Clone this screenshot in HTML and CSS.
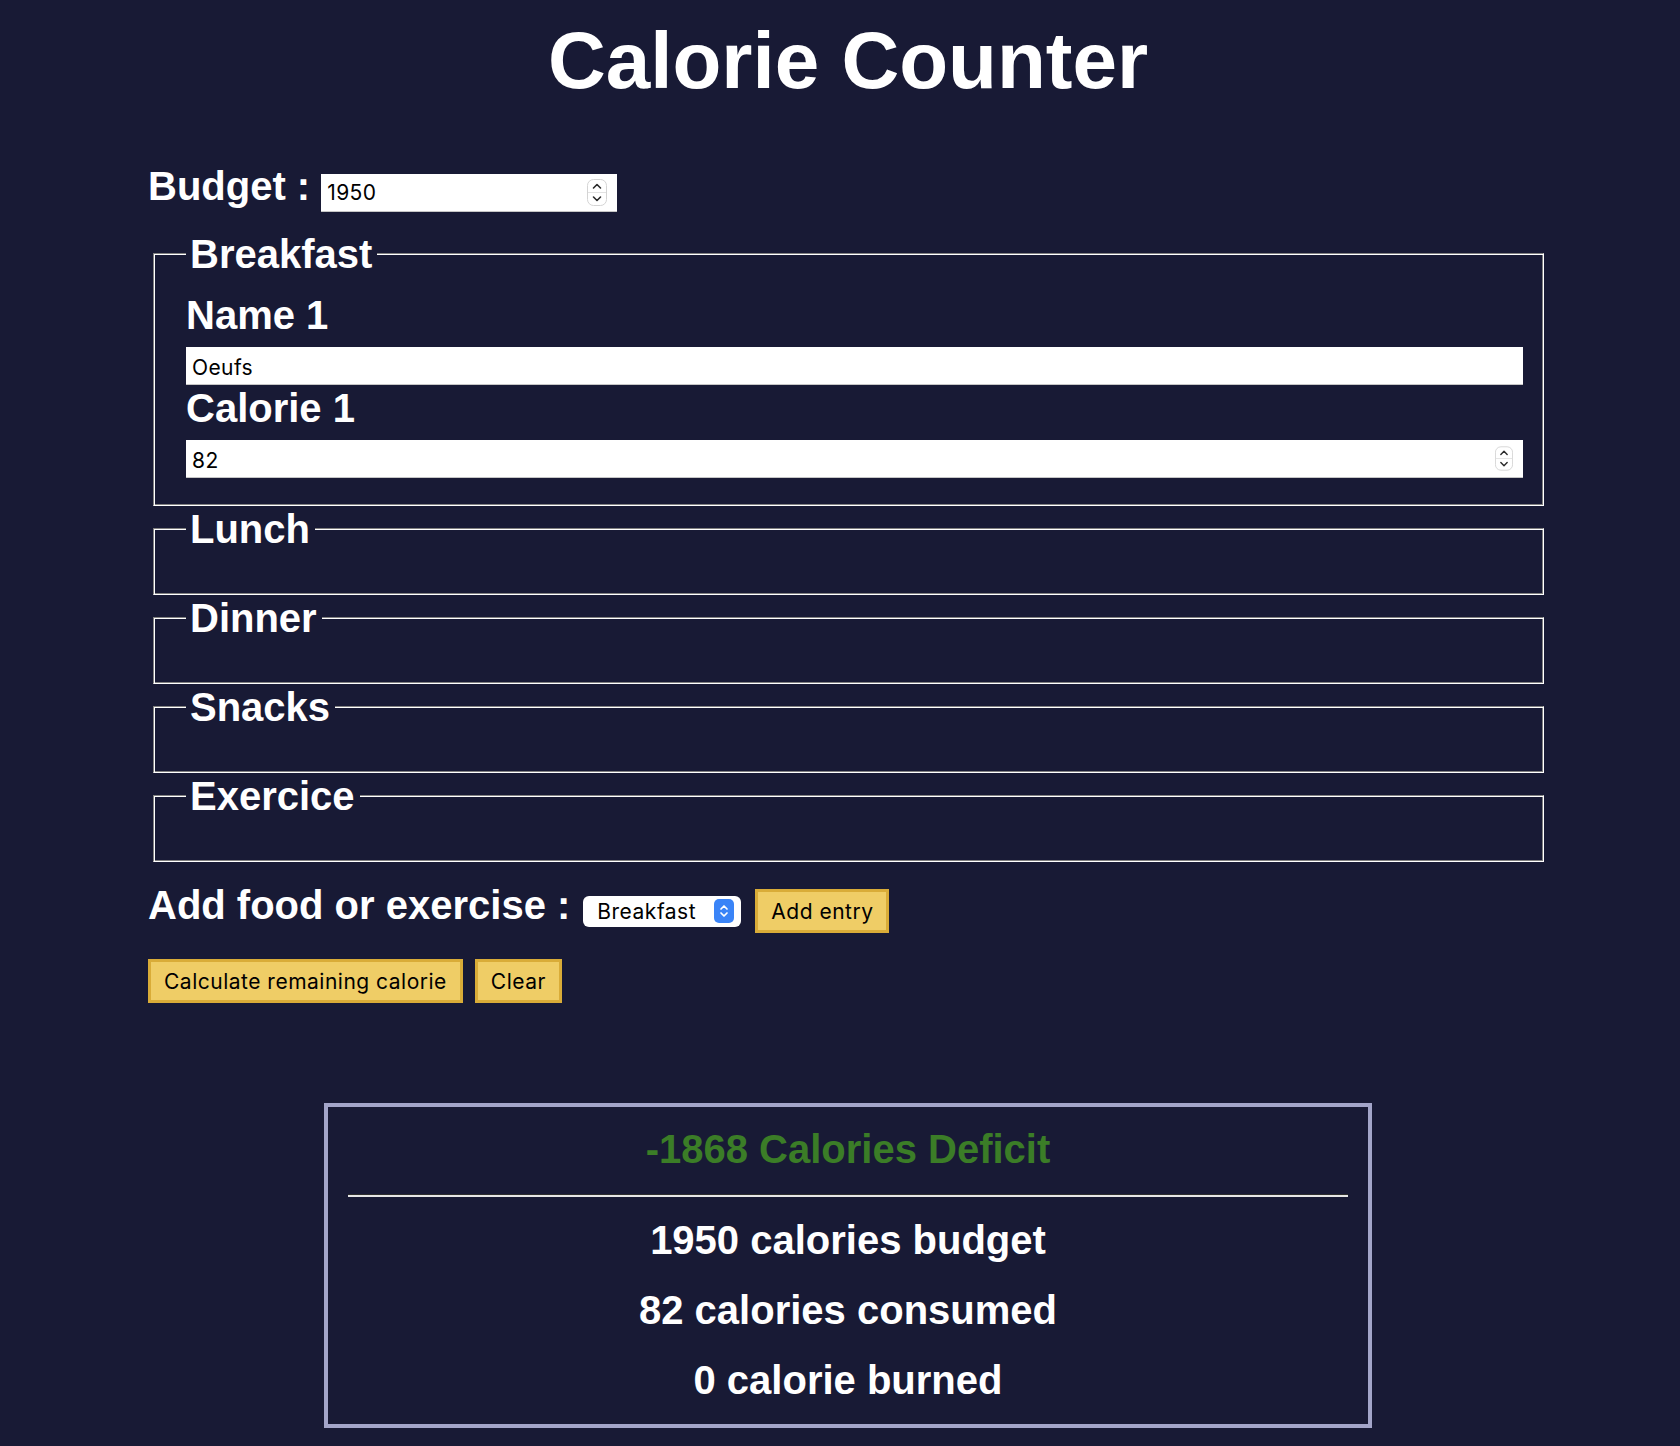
FILE: index.html
```html
<!DOCTYPE html>
<html lang="en">
<head>
<meta charset="utf-8">
<title>Calorie Counter</title>
<link rel="stylesheet" href="styles.css">
</head>
<body>
<main class="page">
  <h1 class="title">Calorie Counter</h1>
  <div class="container">
    <form class="form">
      <div class="budget-row">
        <label class="big-label" for="budget">Budget :</label>
        <span class="num-wrap budget-wrap">
          <input id="budget" class="field num-field" type="number" value="1950">
          <svg class="spinner" viewBox="0 0 20 27" width="20" height="27" aria-hidden="true">
            <rect x="0.5" y="0.5" width="19" height="26" rx="6" fill="#fff" stroke="#d4d4d4"/>
            <line x1="1" y1="13.5" x2="19" y2="13.5" stroke="#e2e2e2"/>
            <path d="M6.5 9 L10 5.5 L13.5 9" fill="none" stroke="#2b2b2b" stroke-width="1.6" stroke-linecap="round" stroke-linejoin="round"/>
            <path d="M6.5 18 L10 21.5 L13.5 18" fill="none" stroke="#2b2b2b" stroke-width="1.6" stroke-linecap="round" stroke-linejoin="round"/>
          </svg>
        </span>
      </div>

      <fieldset class="meal">
        <legend>Breakfast</legend>
        <div class="entries">
          <label class="entry-label" for="name-1">Name 1</label>
          <input id="name-1" class="field wide-field" type="text" value="Oeufs">
          <label class="entry-label" for="cal-1">Calorie 1</label>
          <span class="num-wrap wide-wrap">
            <input id="cal-1" class="field wide-field num-field" type="number" value="82">
            <svg class="spinner spinner-sm" viewBox="0 0 20 27" width="18" height="25" aria-hidden="true">
              <rect x="0.5" y="0.5" width="19" height="26" rx="6" fill="#fff" stroke="#d4d4d4"/>
              <line x1="1" y1="13.5" x2="19" y2="13.5" stroke="#e2e2e2"/>
              <path d="M6.5 9 L10 5.5 L13.5 9" fill="none" stroke="#2b2b2b" stroke-width="1.6" stroke-linecap="round" stroke-linejoin="round"/>
              <path d="M6.5 18 L10 21.5 L13.5 18" fill="none" stroke="#2b2b2b" stroke-width="1.6" stroke-linecap="round" stroke-linejoin="round"/>
            </svg>
          </span>
        </div>
      </fieldset>

      <fieldset class="meal"><legend>Lunch</legend><div class="entries"></div></fieldset>
      <fieldset class="meal"><legend>Dinner</legend><div class="entries"></div></fieldset>
      <fieldset class="meal"><legend>Snacks</legend><div class="entries"></div></fieldset>
      <fieldset class="meal"><legend>Exercice</legend><div class="entries"></div></fieldset>

      <div class="controls">
        <label class="big-label" for="entry-type">Add food or exercise :</label>
        <span class="select-wrap">
          <select id="entry-type" class="select">
            <option>Breakfast</option>
            <option>Lunch</option>
            <option>Dinner</option>
            <option>Snacks</option>
            <option>Exercise</option>
          </select>
          <svg class="select-icon" viewBox="0 0 20 24" width="20" height="24" aria-hidden="true">
            <rect x="0" y="0" width="20" height="24" rx="5" fill="#3a84f7"/>
            <path d="M7 10 L10 7 L13 10" fill="none" stroke="#fff" stroke-width="1.7" stroke-linecap="round" stroke-linejoin="round"/>
            <path d="M7 14 L10 17 L13 14" fill="none" stroke="#fff" stroke-width="1.7" stroke-linecap="round" stroke-linejoin="round"/>
          </svg>
        </span>
        <button type="button" class="btn">Add entry</button>
      </div>

      <div class="actions">
        <button type="button" class="btn">Calculate remaining calorie</button>
        <button type="button" class="btn">Clear</button>
      </div>
    </form>
  </div>

  <div class="output">
    <span class="deficit">-1868 Calories Deficit</span>
    <hr class="rule">
    <p class="stat">1950 calories budget</p>
    <p class="stat">82 calories consumed</p>
    <p class="stat">0 calorie burned</p>
  </div>
</main>
</body>
</html>
```

FILE: styles.css
```css
* {
  box-sizing: border-box;
}

html,
body {
  margin: 0;
  padding: 0;
}

body {
  background: #181a35;
  color: #ffffff;
  font-family: "Liberation Sans", Arial, Helvetica, sans-serif;
  padding-left: 16px;
  min-height: 1446px;
}

.title {
  margin: 15px 0 0;
  text-align: center;
  font-size: 80px;
  line-height: 92px;
  font-weight: bold;
}

.container {
  width: 1400px;
  margin: 56px auto 0;
}

.big-label {
  font-size: 40px;
  line-height: 46px;
  font-weight: bold;
}

.budget-row {
  display: flex;
  align-items: baseline;
  margin-bottom: 19px;
}

.budget-row .big-label {
  margin-right: 11px;
}

.num-wrap {
  position: relative;
  display: inline-block;
}

.field {
  display: block;
  height: 38px;
  border: 0;
  border-radius: 0;
  background: #ffffff;
  color: #000000;
  font-family: Inter, "Liberation Sans", Arial, sans-serif;
  font-size: 21px;
  letter-spacing: 0.4px;
  padding: 0 6px;
  box-shadow: inset 0 -1px 0 #c6c6c6;
  outline: none;
}

.wide-field {
  padding-top: 3px;
}

.num-field {
  -moz-appearance: textfield;
}

.num-field::-webkit-inner-spin-button,
.num-field::-webkit-outer-spin-button {
  -webkit-appearance: none;
  margin: 0;
}

.budget-wrap .field {
  width: 296px;
}

.spinner {
  position: absolute;
  right: 10px;
  top: 5px;
}

.spinner-sm {
  top: 6px;
}

.meal {
  margin: 0 4px 0 5px;
  padding: 15px 20px 27px 32px;
  border: 1px solid;
  border-color: #808080 #ffffff #ffffff #808080;
  box-shadow: inset 1px 1px 0 #ffffff, inset -1px -1px 0 #808080;
  font-size: 40px;
  min-width: 0;
}

.meal legend {
  padding: 0 5px 0 4px;
  font-weight: bold;
  line-height: 46px;
  background: #181a35;
}

.entries {
  display: flex;
  flex-direction: column;
}

.entry-label {
  display: block;
  font-weight: bold;
  font-size: 40px;
  line-height: 46px;
  margin-bottom: 9px;
}

.wide-field,
.wide-wrap {
  width: 100%;
}

.wide-wrap {
  display: block;
}

.controls {
  display: flex;
  align-items: baseline;
  margin-top: 20px;
}

.controls .big-label {
  margin-right: 13px;
}

.select-wrap {
  position: relative;
  display: inline-block;
  width: 158px;
  height: 31px;
  margin-right: 14px;
}

.select {
  -webkit-appearance: none;
  appearance: none;
  display: block;
  width: 100%;
  height: 31px;
  border: 0;
  border-radius: 6px;
  background: #ffffff;
  color: #000000;
  font-family: Inter, "Liberation Sans", Arial, sans-serif;
  font-size: 21px;
  letter-spacing: 0.5px;
  padding: 0 30px 0 14px;
  outline: none;
}

.select-icon {
  position: absolute;
  right: 7px;
  top: 3px;
  pointer-events: none;
}

.btn {
  height: 44px;
  padding: 0 13px;
  border: 3px solid #d9ac38;
  background: #efcd66;
  color: #000000;
  font-family: Inter, "Liberation Sans", Arial, sans-serif;
  font-size: 21px;
  letter-spacing: 0.5px;
  border-radius: 0;
  cursor: pointer;
}

.actions {
  display: flex;
  gap: 12px;
  margin-top: 26px;
}

.output {
  width: 1048px;
  margin: 100px auto 0;
  border: 4px solid #a3a5c9;
  padding: 19px 20px 21px;
  text-align: center;
}

.deficit {
  display: block;
  font-size: 40px;
  line-height: 46px;
  font-weight: bold;
  color: #3b7d27;
}

.rule {
  margin: 22px 0 20px;
  height: 0;
  border: 0;
  border-top: 1px solid #2e2e2e;
  border-bottom: 2px solid #e6e6e6;
}

.stat {
  margin: 0 0 24px;
  font-size: 40px;
  line-height: 46px;
  font-weight: bold;
}

.stat:last-child {
  margin-bottom: 0;
}
```
